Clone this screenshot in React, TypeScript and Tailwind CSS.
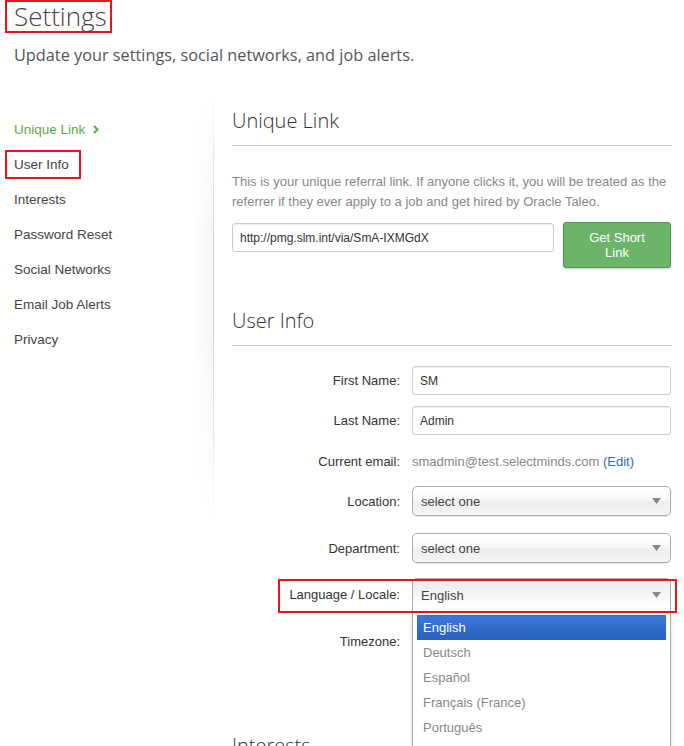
import React from "react";

const navItems = [
  "Unique Link",
  "User Info",
  "Interests",
  "Password Reset",
  "Social Networks",
  "Email Job Alerts",
  "Privacy",
];

const languages = [
  "English",
  "Deutsch",
  "Español",
  "Français (France)",
  "Português",
  "Italiano",
  "Nederlands",
  "日本語",
];

function Arrow() {
  return (
    <svg width="9" height="6" viewBox="0 0 9 6" className="shrink-0">
      <path d="M0 0 L9 0 L4.5 6 Z" fill="#888" />
    </svg>
  );
}

function ChosenSelect({ value }: { value: string }) {
  return (
    <div className="flex h-[30px] w-[259px] items-center justify-between rounded-[5px] border border-[#aaa] bg-[linear-gradient(#fff_20%,#f6f6f6_50%,#eee_52%,#f4f4f4_100%)] pl-[8px] pr-[9px] text-[13px] text-[#444] shadow-[inset_0_0_3px_#fff,0_1px_1px_rgba(0,0,0,0.1)]">
      <span>{value}</span>
      <Arrow />
    </div>
  );
}

function Row({
  label,
  className,
  children,
}: {
  label: string;
  className?: string;
  children: React.ReactNode;
}) {
  return (
    <div className={`flex items-center ${className ?? ""}`}>
      <label className="w-[169px] shrink-0 pr-px text-right text-[13px] text-[#333]">{label}</label>
      <div className="ml-[11px] flex items-center">{children}</div>
    </div>
  );
}

export default function App() {
  return (
    <div className="relative h-[746px] w-[684px] overflow-hidden bg-white font-['Liberation_Sans',Arial,sans-serif]">
      {/* Page header */}
      <header>
        <h1 className="ml-[5px] inline-block border-2 border-[#e3161d] pl-[7px] pr-[3px] font-['Open_Sans',sans-serif] text-[26px] font-light leading-[29px] text-[#444]">
          Settings
        </h1>
        <p className="ml-[14px] mt-[10px] font-['Open_Sans',sans-serif] text-[16.3px] text-[#555]">
          Update your settings, social networks, and job alerts.
        </p>
      </header>

      <div className="mt-[19px] flex">
        {/* Side nav */}
        <aside className="flex w-[214px] shrink-0">
          <nav className="flex-1 pt-[26px]">
            <ul className="text-[13.5px] leading-[35px] text-[#444]">
              {navItems.map((item, i) => (
                <li key={item}>
                  {i === 0 ? (
                    <span className="ml-[14px] flex items-center gap-[8px] text-[#5aab46]">
                      {item}
                      <svg width="6" height="9" viewBox="0 0 6 9">
                        <path d="M1 1 L4.5 4.5 L1 8" fill="none" stroke="#5aab46" strokeWidth="2" />
                      </svg>
                    </span>
                  ) : i === 1 ? (
                    <span className="ml-[5px] inline-block border-2 border-[#e3161d] pl-[7px] pr-[10px] leading-[25px]">
                      {item}
                    </span>
                  ) : (
                    <span className="ml-[14px]">{item}</span>
                  )}
                </li>
              ))}
            </ul>
          </nav>
          <div className="h-[442px] w-[24px] border-r border-[#cfcfcf] bg-[linear-gradient(to_right,rgba(0,0,0,0),rgba(0,0,0,0.035))] [mask-image:linear-gradient(to_bottom,transparent,black_35%,black_55%,transparent)]" />
        </aside>

        {/* Main content */}
        <main className="ml-[18px] w-[440px]">
          <section>
            <h2 className="mt-[21px] font-['Open_Sans',sans-serif] text-[20px] font-light leading-[28px] text-[#333]">
              Unique Link
            </h2>
            <hr className="mt-[10px] border-t border-[#ccc]" />
            <p className="mt-[26px] text-[13px] leading-[20px] text-[#888]">
              This is your unique referral link. If anyone clicks it, you will be treated as the referrer if they ever apply to a job and get hired by Oracle Taleo.
            </p>
            <div className="mt-[10px] flex items-start justify-between">
              <input
                readOnly
                value="http://pmg.slm.int/via/SmA-IXMGdX"
                className="mt-px h-[29px] w-[322px] rounded-[3px] border border-[#ccc] px-[7px] text-[12px] text-[#333] shadow-[inset_0_1px_1px_rgba(0,0,0,0.075)] outline-none"
              />
              <button className="mr-px h-[46px] w-[108px] rounded-[3px] border border-[#4a9a48] bg-[#6cb46a] text-[13px] leading-[15px] text-white shadow-[0_1px_2px_rgba(0,0,0,0.2)]">
                Get Short
                <br />
                Link
              </button>
            </div>
          </section>

          <section>
            <h2 className="mt-[39px] font-['Open_Sans',sans-serif] text-[20px] font-light leading-[28px] text-[#333]">
              User Info
            </h2>
            <hr className="mt-[10px] border-t border-[#ccc]" />

            <Row label="First Name:" className="mt-[20px] h-[29px]">
              <input
                readOnly
                value="SM"
                className="h-[29px] w-[259px] rounded-[3px] border border-[#ccc] px-[7px] text-[12px] text-[#333] shadow-[inset_0_1px_1px_rgba(0,0,0,0.075)] outline-none"
              />
            </Row>
            <Row label="Last Name:" className="mt-[11px] h-[29px]">
              <input
                readOnly
                value="Admin"
                className="h-[29px] w-[259px] rounded-[3px] border border-[#ccc] px-[7px] text-[12px] text-[#333] shadow-[inset_0_1px_1px_rgba(0,0,0,0.075)] outline-none"
              />
            </Row>
            <Row label="Current email:" className="mt-[11px] h-[30px]">
              <span className="text-[13px] text-[#888]">
                smadmin@test.selectminds.com{" "}
                <a className="text-[#2a6ebb]">(Edit)</a>
              </span>
            </Row>
            <Row label="Location:" className="mt-[10px] h-[30px]">
              <ChosenSelect value="select one" />
            </Row>
            <Row label="Department:" className="mt-[17px] h-[30px]">
              <ChosenSelect value="select one" />
            </Row>

            {/* Language row, open dropdown */}
            <div className="relative z-10 mt-[15px] flex h-[33px] items-center">
              <label className="w-[169px] shrink-0 pr-px text-right text-[13px] text-[#333]">
                Language / Locale:
              </label>
              <div className="relative ml-[11px] h-[33px] w-[259px]">
                <div className="flex h-[33px] items-center justify-between rounded-t-[5px] border border-b-0 border-[#aaa] bg-[linear-gradient(#eee_20%,#fff_80%)] pl-[8px] pr-[9px] text-[13px] text-[#444] shadow-[inset_0_1px_0_#fff]">
                  <span>English</span>
                  <Arrow />
                </div>
                <ul className="absolute left-0 top-full h-[250px] w-[259px] border border-t-0 border-[#aaa] bg-white pl-[4px] pr-[4px] pt-[4px] text-[13px] leading-[15px] text-[#888] shadow-[0_4px_5px_rgba(0,0,0,0.15)]">
                  {languages.map((lang, i) => (
                    <li
                      key={lang}
                      className={
                        i === 0
                          ? "bg-[linear-gradient(#3875d7_20%,#2a62bc_90%)] px-[6px] py-[5px] text-white"
                          : "px-[6px] py-[5px]"
                      }
                    >
                      {lang}
                    </li>
                  ))}
                </ul>
              </div>
              <div className="pointer-events-none absolute left-[46px] top-px h-[34px] w-[399px] border-2 border-[#e3161d]" />
            </div>

            <Row label="Timezone:" className="mt-[15px] h-[30px]">
              <ChosenSelect value="select one" />
            </Row>
          </section>

          <section>
            <h2 className="mt-[76px] font-['Open_Sans',sans-serif] text-[20px] font-light leading-[28px] text-[#333]">
              Interests
            </h2>
          </section>
        </main>
      </div>
    </div>
  );
}
